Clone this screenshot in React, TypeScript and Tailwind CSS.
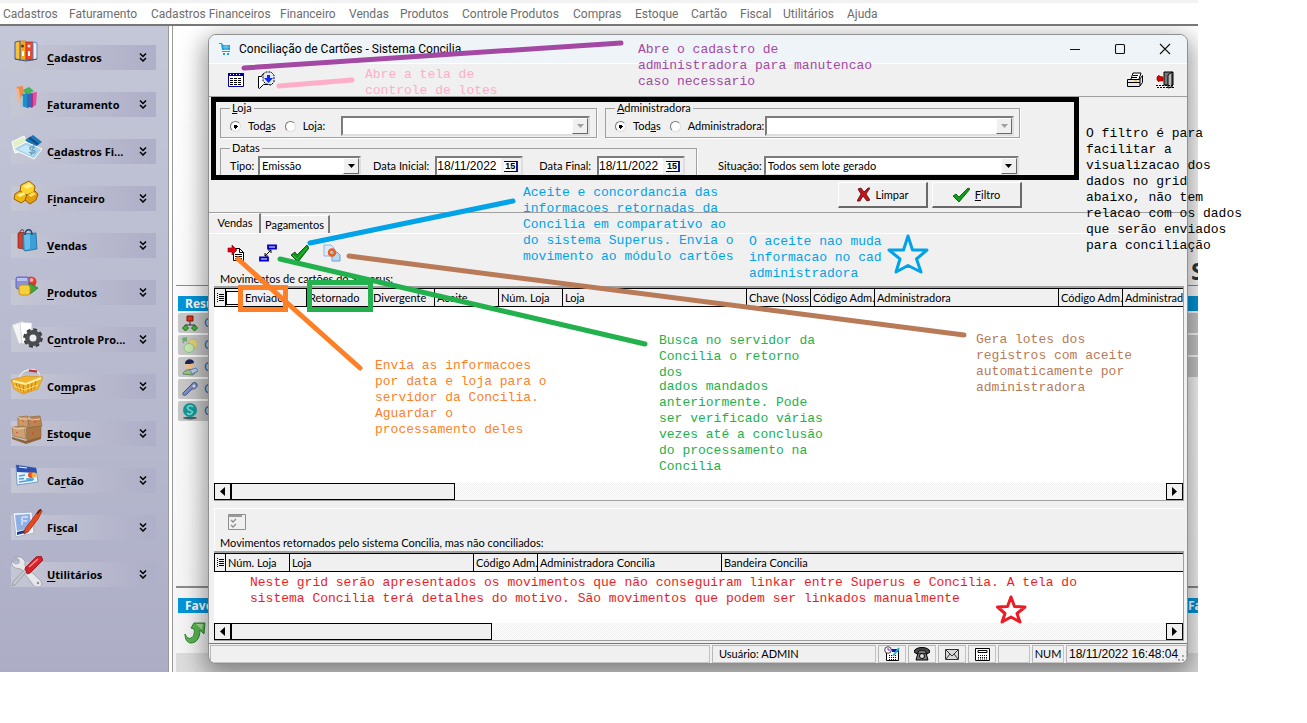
import type { ReactNode } from "react";

const MENU = [
  ["Cadastros", "w-[66px]"],
  ["Faturamento", "w-[82px]"],
  ["Cadastros Financeiros", "w-[129px]"],
  ["Financeiro", "w-[69px]"],
  ["Vendas", "w-[51px]"],
  ["Produtos", "w-[62px]"],
  ["Controle Produtos", "w-[111px]"],
  ["Compras", "w-[62px]"],
  ["Estoque", "w-[56px]"],
  ["Cartão", "w-[49px]"],
  ["Fiscal", "w-[43px]"],
  ["Utilitários", "w-[64px]"],
  ["Ajuda", "w-[40px]"],
];

/* ---------- sidebar icons, drawn on a 32 x 28 canvas ---------- */

const CadastrosIcon = (
  <>
    <path d="M9 2h6v19H9z" fill="#f6a91c" stroke="#c47a10" strokeWidth=".7" />
    <path d="M4 3l5-1v19l-5-1z" fill="#f3c23a" stroke="#3a5fa8" strokeWidth="1" />
    <path d="M15 3h7v18h-7z" fill="#e8492e" stroke="#a82a1a" strokeWidth=".7" />
    <path d="M22 3l4 1v16l-4 1z" fill="#e9edf6" stroke="#6a86bd" strokeWidth="1" />
    <circle cx="11.500" cy="7" r="1.500" fill="#7a2d10" />
    <circle cx="18" cy="7" r="1.500" fill="#ffe9e0" />
    <path d="M11 12h2v5h-2zM17 12h2v5h-2z" fill="#fff" />
    <path d="M4 20l11 2 11-2" stroke="#38588f" fill="none" />
  </>
);
const FaturamentoIcon = (
  <>
    <path d="M5 1l7-1 1 10-5 3z" fill="#ef8b4a" />
    <path d="M5 1l3 2 2 16-3-4z" fill="#f7b487" />
    <path d="M12 4l6-3 5 4-8 4z" fill="#45b35a" />
    <path d="M10 9l6-2v15l-5-2z" fill="#1e8ec4" />
    <path d="M10 9l2 1v11l-2-2z" fill="#7fd0ee" />
    <path d="M16 8l4-1v14l-4 1z" fill="#3c63b8" />
    <path d="M20 7l6-1-1 13-5 3z" fill="#e04fa0" />
    <path d="M20 7l2 1v13l-2 1z" fill="#b32d7c" />
  </>
);
const FinanceCardsIcon = (
  <>
    <path d="M1 9l12-6 5 13-14 4z" fill="#e3efc4" stroke="#fff" />
    <path d="M14 7l8-5 9 7-8 6z" fill="#1b76ba" />
    <path d="M17 5l2-1 9 7-2 1z" fill="#164a78" />
    <path d="M2 16l13-7 16 7-8 10z" fill="#a8d4ea" stroke="#fff" />
    <path d="M7 16l8-4 9 4-5 6z" fill="#c9e7f4" />
    <path d="M24 15c-2-2-6-1-5 1s6 1 5 3-5 1-6 0M23 12l-3 10" fill="none" stroke="#6c9fc0" strokeWidth="1.300" />
  </>
);
const GoldIcon = (
  <>
    <path d="M4 14l8-5 5 4-1 6-6 4-7-4z" fill="#f0b80e" stroke="#9b5f08" />
    <path d="M16 14l7-4 4 4-2 6-6 4-5-4z" fill="#e39e0b" stroke="#9b5f08" />
    <path d="M10 5l8-4 6 5-1 6-7 3-7-4z" fill="#ffd22c" stroke="#9b5f08" />
    <path d="M12 6l6-3 4 3-6 3z" fill="#fff08c" />
    <path d="M6 15l6-3 3 2-6 3z" fill="#fff08c" />
    <path d="M17 15l5-3 3 2-5 3z" fill="#ffdf5a" />
  </>
);
const BagsIcon = (
  <>
    <path d="M7 6l6-1v17l-6-1z" fill="#d0402b" stroke="#8f2415" strokeWidth=".7" />
    <path d="M12 7l13-1 1 16-12 2-2-2z" fill="#3b9fd8" stroke="#23689c" strokeWidth=".8" />
    <path d="M13 8l6-1v15l-5 1z" fill="#68bdea" />
    <path d="M14 8c0-6 7-8 7 0" fill="none" stroke="#1e4c72" strokeWidth="1.500" />
    <path d="M9 6c0-4 3-4 4-2" fill="none" stroke="#6a2418" />
  </>
);
const ShapesIcon = (
  <>
    <circle cx="20" cy="8" r="5.500" fill="#e23a2a" />
    <circle cx="20.500" cy="6" r="2" fill="#ffa79c" />
    <rect x="5" y="3" width="13" height="12" rx="2" fill="#8a90d6" stroke="#6065b2" />
    <path d="M6 4h10v3H6z" fill="#bcc0f0" />
    <path d="M18 9l9 5-8 6z" fill="#3fa63c" stroke="#257a25" strokeWidth=".8" />
    <rect x="8" y="11" width="11" height="10" rx="2.500" fill="#f7cf3a" stroke="#c6960e" />
  </>
);
const GearIcon = (
  <>
    <path d="M1 4l11-4 6 18-10 5z" fill="#f4f4f4" stroke="#c9c9cf" strokeWidth=".7" />
    <path d="M9 1l12 1-1 18-9 3z" fill="#fff" stroke="#c9c9cf" strokeWidth=".7" />
    <circle cx="22" cy="17" r="8" fill="none" stroke="#3c3e42" strokeWidth="3.500" strokeDasharray="3.600 2.680" />
    <circle cx="22" cy="17" r="5.500" fill="none" stroke="#4a4c50" strokeWidth="5" />
    <circle cx="22" cy="17" r="3.500" fill="#eceef2" />
  </>
);
const BasketIcon = (
  <>
    <path d="M8 10c3-9 16-12 21-3" fill="none" stroke="#e9e4e4" strokeWidth="1.500" />
    <path d="M18 2.500l8 1" stroke="#c02a2a" strokeWidth="2" />
    <path d="M0 12l15-4 17 1-5 12-15 5-9-5z" fill="#f2b32c" stroke="#d9951d" strokeWidth=".8" />
    <path d="M2 13l13 3 15-6" fill="none" stroke="#fff0a8" strokeWidth="2" />
    <path d="M5 15l2 6M8 16l2 7M12 17l1 8M17 16v8M21 15l-1 8M25 13l-2 8" stroke="#b9770d" strokeWidth=".9" fill="none" />
    <path d="M3 18l10 4 14-5" stroke="#ffe28a" strokeWidth=".9" fill="none" />
  </>
);
const BoxesIcon = (
  <>
    <path d="M1 22l14 4 15-5v3l-15 5-14-5z" fill="#8d6338" />
    <path d="M7 2l10-1v11H7z" fill="#c99b6b" stroke="#8e6238" strokeWidth=".6" />
    <path d="M17 2l12-1 2 10-13 2z" fill="#b98552" stroke="#8e6238" strokeWidth=".6" />
    <path d="M1 12l12-1 2 13-13-3z" fill="#cfa172" stroke="#8e6238" strokeWidth=".6" />
    <path d="M15 13l15-2v11l-14 4z" fill="#ab7746" stroke="#8e6238" strokeWidth=".6" />
    <path d="M7 2l3 2h9M17 2l4 3 8-1M1 12l5 2 8-1" stroke="#ead0b0" fill="none" />
    <path d="M11 5l2 2M24 5v3M5 17l2 1M22 17v3" stroke="#d2492f" />
  </>
);
const CardIcon = (
  <>
    <path d="M5 3l20 3 2 14-21 3z" fill="#eaf3fb" stroke="#7c9cc9" />
    <path d="M5 3l20 3 1 5-20-1z" fill="#2a4fb0" />
    <path d="M8 5l8 1" stroke="#fff" />
    <circle cx="20" cy="13" r="3" fill="#e5532c" />
    <circle cx="23" cy="13" r="2.500" fill="#f6b23c" />
    <path d="M8 14l6-1M8 17l5-.5M15 17h8M8 20l14-2" stroke="#4aa1d8" strokeWidth="1.500" />
  </>
);
const PenIcon = (
  <>
    <path d="M2 4l19-1 2 21-18 4z" fill="#f3f6fb" stroke="#a9b4cc" />
    <path d="M4 6l15-1 1 14-14 3z" fill="#8fb0e6" />
    <path d="M6 23l8-2v3l-8 2z" fill="#163f8f" />
    <path d="M11 8h6M11 12h5M11 8v8" stroke="#c5d8f6" strokeWidth="2" />
    <path d="M28 1l3 1-4 8-10 13-4 2 1-5z" fill="#e8481f" stroke="#9c2b0e" strokeWidth=".8" />
    <path d="M30 0l-4 5" stroke="#5c2413" strokeWidth="1.500" />
  </>
);
const ToolsIcon = (
  <>
    <path d="M4 1l6 0 4 4 0 5 16 15 1 4-3 2-5-1L10 13 4 12 1 9 0 5l5 3 3-1 0-3z" fill="#e6e7ea" stroke="#9b9ca4" strokeWidth=".8" />
    <path d="M16 15L4 29l-3 1 1-4 12-13z" fill="#c6c8ce" stroke="#8b8c94" strokeWidth=".7" />
    <path d="M14 12L25 1l5-1 2 4-13 13-3 1z" fill="#d6222c" stroke="#8f1018" strokeWidth=".8" />
    <path d="M18 11L27 3" stroke="#ff8d90" strokeWidth="1.500" />
    <circle cx="27" cy="27" r="1.200" fill="#8b8c94" />
  </>
);

const SIDE: [ReactNode, string, string, string][] = [
  [CadastrosIcon, "", "C", "adastros"],
  [FaturamentoIcon, "", "F", "aturamento"],
  [FinanceCardsIcon, "C", "a", "dastros Fi..."],
  [GoldIcon, "F", "i", "nanceiro"],
  [BagsIcon, "", "V", "endas"],
  [ShapesIcon, "", "P", "rodutos"],
  [GearIcon, "C", "o", "ntrole Pro..."],
  [BasketIcon, "Co", "m", "pras"],
  [BoxesIcon, "", "E", "stoque"],
  [CardIcon, "Ca", "r", "tão"],
  [PenIcon, "Fi", "s", "cal"],
  [ToolsIcon, "", "U", "tilitários"],
];

function Sidebar() {
  return (
    <nav className="w-[168px] shrink-0 bg-linear-to-b from-[#c4c7d7] via-[#b8bbd0] to-[#adaec6] pt-[19px] pr-3 pl-[11px]">
      {SIDE.map(([icon, a, u, b]) => (
        <button
          key={a + u + b}
          type="button"
          className="mb-[22px] flex h-[25px] w-full items-center bg-linear-to-r from-[#c5c7d5] to-[#aeafc8] text-left text-[11px] font-bold text-black"
        >
          <svg viewBox="0 0 32 30" className="-mt-2 h-[30px] w-8 shrink-0">{icon}</svg>
          <span className="ml-1 flex-1 pt-px whitespace-nowrap">
            {a}
            <u className="underline-offset-2">{u}</u>
            {b}
          </span>
          <svg viewBox="0 0 8 9" className="mr-[9px] h-[9px] w-2" fill="none" stroke="#000" strokeWidth="1.500">
            <path d="M1 .5l3 3 3-3M1 5l3 3 3-3" />
          </svg>
        </button>
      ))}
    </nav>
  );
}

/* ---------- dashboard behind the dialog ---------- */

const HierarchyIcon = (
  <>
    <path d="M8 6v4M3 12v-2h10v2" stroke="#333" fill="none" />
    <path d="M5 1h6v5H5z" fill="#e0341c" stroke="#7d1a0c" />
    <path d="M3.500 10l3 3-3 3-3-3zM12.500 10l3 3-3 3-3-3z" fill="#3fb53a" stroke="#1d6c1b" />
  </>
);
const MoneyIcon = (
  <>
    <ellipse cx="11" cy="7" rx="5" ry="5" fill="#e9d27a" stroke="#b3c08a" />
    <ellipse cx="7" cy="11" rx="5" ry="4.500" fill="#c9e8b4" stroke="#8cc58a" />
    <path d="M0 1l5-1v5L3 4l-2 3z" fill="#6fae77" />
  </>
);
const PersonIcon = (
  <>
    <path d="M1 15c0-5 12-6 14-3l-4 4z" fill="#9ac28c" stroke="#5f8a56" />
    <path d="M8 11l6-2 2 3-6 3z" fill="#bcd0ec" stroke="#6b86b5" />
    <circle cx="7" cy="6" r="4" fill="#f2c48e" />
    <path d="M3 5c0-6 9-6 9-1L8 5z" fill="#1d2658" />
  </>
);
const WrenchIcon = (
  <>
    <path d="M1 12l8-8c2-4 7-3 6 1-1 3-4 3-5 3l-6 6c-3 1-4-1-3-2z" fill="#7d8fc0" stroke="#45568c" />
    <circle cx="12" cy="5" r="1.500" fill="#dfe4f2" />
  </>
);
const GlobeIcon = (
  <>
    <ellipse cx="8" cy="15" rx="7" ry="1.500" fill="#496268" />
    <circle cx="8" cy="7" r="7" fill="#159a9a" />
    <path d="M11 4C8 1 4 4 6 6s6 2 4 4-4 1-5 0" stroke="#7fe0da" strokeWidth="1.500" fill="none" />
  </>
);
const QUICK = [HierarchyIcon, MoneyIcon, PersonIcon, WrenchIcon, GlobeIcon];

function Dashboard() {
  return (
    <div className="absolute inset-0 flex flex-col bg-linear-to-b from-white to-[#f4f4f4] pl-[3px]">
      <div className="flex h-[260px] items-end justify-end overflow-hidden border-b border-[#8c8c8c] pb-[2px]">
        <span className="w-[7px] overflow-hidden text-[24px] leading-6 font-bold text-[#333]">S</span>
      </div>
      <div className="flex h-[302px] justify-between border-b-2 border-[#8c8c8c] pt-[10px] pl-[2px]">
        <section className="w-1/2">
          <h2 className="h-[15px] bg-[#0095da] pl-[7px] text-[12px] leading-[15px] font-bold text-white">Resu</h2>
          <ul className="mt-[2px] flex flex-col gap-[2px]">
            {QUICK.map((icon, i) => (
              <li key={i} className="flex h-5 items-center rounded-l-xs bg-[#c8c8c8] pl-1">
                <svg viewBox="0 0 16 17" className="h-[17px] w-4">{icon}</svg>
                <span className="ml-[6px] text-[13px] text-[#2a5cc4]">C</span>
              </li>
            ))}
          </ul>
        </section>
        <section className="flex w-1/2 flex-col gap-[2px]">
          <div className="h-[15px] bg-[#0095da]" />
          <div className="h-5 bg-[#c8c8c8]" />
          <div className="h-5 bg-[#c8c8c8]" />
          <div className="h-5 bg-[#c8c8c8]" />
        </section>
      </div>
      <div className="mt-[10px] ml-[2px] flex h-[15px] items-center justify-between bg-[#0095da] pl-[7px] text-[12px] font-bold text-white">
        <h2>Favo</h2>
        <span className="w-[10px] overflow-hidden">Fa</span>
      </div>
      <svg viewBox="0 0 22 24" className="mt-2 ml-2 h-6 w-[22px]">
        <path d="M10 2l11 0-1 11-4-4c0 7-3 13-9 13-4 0-6-4-6-9 2 4 4 5 6 4 3-1 4-6 3-9L7 7z" fill="#5bb750" stroke="#2f8333" />
        <path d="M12 3h7l-1 6-2-2z" fill="#a3e092" />
      </svg>
      <div className="mt-2 flex-1 bg-[#dcdcdc]" />
    </div>
  );
}

/* ---------- classic controls ---------- */

const SUNKEN = "border-2 border-t-[#7b7b7b] border-l-[#7b7b7b] border-r-[#dedede] border-b-[#dedede] bg-white";
const RAISED = "border-t border-l border-t-white border-l-white border-r-[#696969] border-b-[#696969] bg-[#f0f0f0]";

function Combo({ id, value, width, disabled }: { id: string; value: string; width: string; disabled?: boolean }) {
  return (
    <span className={`relative inline-flex h-5 ${width} ${SUNKEN}`}>
      <select id={id} aria-label={id} disabled={disabled} defaultValue={value} className="w-full appearance-none bg-white pl-[2px] text-[11px] leading-4 text-black opacity-100 outline-none">
        <option>{value}</option>
      </select>
      <span className={`pointer-events-none absolute inset-y-0 right-0 flex w-4 items-center justify-center border-r border-b ${RAISED}`}>
        <svg viewBox="0 0 7 4" className="h-1 w-[7px]">
          <path d="M0 0h7L3.500 4z" fill={disabled ? "#a0a0a0" : "#000"} />
        </svg>
      </span>
    </span>
  );
}

function DateBox({ id }: { id: string }) {
  return (
    <span className={`flex h-5 w-[88px] font-['Liberation_Sans',Arial,sans-serif] ${SUNKEN}`}>
      <input id={id} defaultValue="18/11/2022" className="w-full min-w-0 bg-white text-[12px] leading-4 text-black outline-none" />
      <button type="button" aria-label="Calendário" className="flex w-5 shrink-0 items-center justify-center bg-[#f0f0f0]">
        <span className="border-t border-r-2 border-b border-black border-r-[#1c1c8a] bg-white px-px text-[9px] leading-[9px] font-bold">15</span>
      </button>
    </span>
  );
}

function Radio({ name, id, checked, children }: { name: string; id: string; checked?: boolean; children: ReactNode }) {
  return (
    <>
      <input
        id={id}
        type="radio"
        name={name}
        defaultChecked={checked}
        className="size-[11px] appearance-none rounded-full border border-t-[#777] border-r-[#ddd] border-b-[#ddd] border-l-[#777] bg-white checked:bg-[radial-gradient(circle,#000_0_2px,#fff_2px)]"
      />
      <label htmlFor={id} className="mr-[9px] ml-[7px] whitespace-nowrap">{children}</label>
    </>
  );
}

const GROUP = "min-w-0 shrink-0 border border-[#a0a0a0] pr-[6px] pl-[9px] shadow-[1px_1px_0_#fff]";
const LEGEND = "px-[2px] leading-[14px]";

function Filters() {
  return (
    <form className="border-b border-[#a0a0a0] pt-1 pb-1 pl-[11px]" onSubmit={(e) => e.preventDefault()}>
      <div className="flex gap-2">
        <fieldset className={`w-[377px] ${GROUP}`}>
          <legend className={LEGEND}><u>L</u>oja</legend>
          <div className="flex h-[22px] items-center">
            <Radio name="loja" id="loja-todas" checked>Tod<u>a</u>s</Radio>
            <Radio name="loja" id="loja-uma">Loja:</Radio>
            <span className="ml-auto flex"><Combo id="Loja" value="" width="w-[249px]" disabled /></span>
          </div>
        </fieldset>
        <fieldset className={`w-[415px] ${GROUP}`}>
          <legend className={LEGEND}><u>A</u>dministradora</legend>
          <div className="flex h-[22px] items-center justify-between">
            <span className="flex items-center">
              <Radio name="adm" id="adm-todas" checked>Tod<u>a</u>s</Radio>
              <Radio name="adm" id="adm-uma">Administradora:</Radio>
            </span>
            <span className="-ml-2 flex"><Combo id="Administradora" value="" width="w-[249px]" disabled /></span>
          </div>
        </fieldset>
      </div>
      <div className="mt-[3px] flex">
        <fieldset className={`w-[477px] ${GROUP}`}>
          <legend className={LEGEND}>Datas</legend>
          <div className="flex h-[22px] items-center">
            <label htmlFor="Tipo" className="w-7">Tipo:</label>
            <Combo id="Tipo" value="Emissão" width="w-[103px]" />
            <label htmlFor="ini" className="mr-[6px] ml-auto">Data Inicial:</label>
            <DateBox id="ini" />
            <label htmlFor="fim" className="mr-[6px] ml-4">Data Final:</label>
            <DateBox id="fim" />
            <span className="w-[5px]" />
          </div>
        </fieldset>
        <div className="flex items-center gap-[2px] pt-3 pl-[21px]">
          <label htmlFor="Situacao">Situação:</label>
          <Combo id="Situacao" value="Todos sem lote gerado" width="w-[255px]" />
        </div>
      </div>
      <div className="mt-1 flex w-[802px] justify-end gap-1">
        <button type="button" className={`flex h-[26px] w-[90px] items-center justify-center gap-[6px] border-r-2 border-b-2 ${RAISED}`}>
          <svg viewBox="0 0 13 15" className="h-[15px] w-[13px]">
            <path d="M1 2l3-1 3 4 4-4h2L9 7l4 6-3 1-4-5-3 5H0l4-7z" fill="#c4151b" stroke="#5c0608" strokeWidth=".8" />
          </svg>
          Limpar
        </button>
        <button type="submit" className={`flex h-[26px] w-[90px] items-center justify-center gap-[5px] border-r-2 border-b-2 ${RAISED}`}>
          <svg viewBox="0 0 17 15" className="h-[15px] w-[17px]">
            <path d="M0 9l3-2 3 3 9-9 2 1-11 13z" fill="#0aa014" stroke="#06430a" strokeWidth=".8" />
          </svg>
          <span><u>F</u>iltro</span>
        </button>
      </div>
    </form>
  );
}

function Scrollbar({ thumb }: { thumb: string }) {
  return (
    <div className="flex h-[17px] bg-[repeating-conic-gradient(#f0f0f0_0_25%,#fff_0_50%)] bg-[length:2px_2px]">
      <button type="button" aria-label="Rolar para a esquerda" className="flex w-[17px] items-center justify-center border border-black bg-[#f0f0f0]">
        <svg viewBox="0 0 5 9" className="h-[9px] w-[5px]"><path d="M5 0v9L0 4.500z" /></svg>
      </button>
      <div className={`border border-black bg-[#f0f0f0] ${thumb}`} />
      <button type="button" aria-label="Rolar para a direita" className="ml-auto flex w-[17px] items-center justify-center border border-black bg-[#f0f0f0]">
        <svg viewBox="0 0 5 9" className="h-[9px] w-[5px]"><path d="M0 0v9l5-4.500z" /></svg>
      </button>
    </div>
  );
}

function Grid({ cols, check, body, thumb }: { cols: [string, string][]; check?: boolean; body: string; thumb: string }) {
  return (
    <div className="border-t-2 border-r border-b border-[#a0a0a0] bg-white">
      <div className={body}>
        <table className="w-full table-fixed border-collapse bg-[#f0f0f0]">
          <thead>
            <tr className="h-[18px] border-y border-black">
              <th className="w-[11px] border-l border-black p-0">
                <svg viewBox="0 0 7 9" className="mx-auto h-[9px] w-[7px]" stroke="#000" shapeRendering="crispEdges">
                  <path d="M0 .5h1M0 2.500h1M0 4.500h1M0 6.500h1M0 8.500h1M2 1.500h5M2 3.500h5M2 5.500h5M2 7.500h5" />
                </svg>
              </th>
              {cols.map(([label, width], i) => (
                <th key={i} className={`overflow-hidden border-l border-black p-0 pl-[2px] text-left font-normal whitespace-nowrap ${width}`}>
                  {check && i === 0 ? (
                    <span className="flex items-center gap-[5px]">
                      <input type="checkbox" aria-label="Selecionar todos" className="-ml-[2px] size-[14px] appearance-none border border-black bg-white" />
                      {label}
                    </span>
                  ) : (
                    label
                  )}
                </th>
              ))}
            </tr>
          </thead>
        </table>
      </div>
      <Scrollbar thumb={thumb} />
    </div>
  );
}

const SALES: [string, string][] = [
  ["Enviado", "w-[81px]"],
  ["Retornado", "w-16"],
  ["Divergente", "w-16"],
  ["Aceite", "w-16"],
  ["Núm. Loja", "w-16"],
  ["Loja", "w-[184px]"],
  ["Chave (Noss", "w-16"],
  ["Código Adm.", "w-16"],
  ["Administradora", "w-[184px]"],
  ["Código Adm.", "w-16"],
  ["Administrado", "w-auto"],
];
const RETURNED: [string, string][] = [
  ["Núm. Loja", "w-16"],
  ["Loja", "w-[184px]"],
  ["Código Adm.", "w-16"],
  ["Administradora Concilia", "w-[184px]"],
  ["Bandeira Concilia", "w-auto"],
];

function IconButton({ label, children }: { label: string; children: ReactNode }) {
  return (
    <button type="button" aria-label={label} className="flex size-5 items-center justify-center">
      <svg viewBox="0 0 18 18" className="size-[18px]">{children}</svg>
    </button>
  );
}

const STATUS = "flex items-center justify-center border border-t-[#b8b8b8] border-l-[#b8b8b8] border-r-[#c4c4c4] border-b-[#c4c4c4]";

function Dialog() {
  return (
    <main className="relative mt-2 mr-[10px] mb-2 ml-[35px] overflow-hidden rounded-lg border border-[#8f8f8f] bg-[#f0f0f0] text-[11px] leading-[14px] text-black">
      <header className="flex h-[29px] items-center border-b border-white bg-[#eff4f8] pl-[10px]">
        <svg viewBox="0 0 12 13" className="h-[13px] w-3" fill="#1aa3e0">
          <path d="M0 0h3l1 2h7v5H3L2 1H0zM3 8h8v1H3zM4 10h2v2H4zM8 10h2v2H8z" />
          <path d="M4 4h6M6 2v5M8 2v5" stroke="#bfe6f7" strokeWidth=".5" />
        </svg>
        <h1 className="ml-2 font-[Roboto,sans-serif] text-[12px]">Conciliação de Cartões - Sistema Concilia</h1>
        <div className="ml-auto flex">
          {["M1 6.500h10", "M1.500 2.500q0-1 1-1h7q1 0 1 1v7q0 1-1 1h-7q-1 0-1-1z", "M1 1l10 10M11 1L1 11"].map((d, i) => (
            <button key={i} type="button" aria-label={["Minimizar", "Maximizar", "Fechar"][i]} className="flex w-[45px] justify-center">
              <svg viewBox="0 0 12 12" className="size-3" fill="none" stroke="#111" strokeWidth="1.100"><path d={d} /></svg>
            </button>
          ))}
        </div>
      </header>

      <div className="flex h-[33px] items-center border-b border-[#a0a0a0] pr-3 pl-[17px]">
        <IconButton label="Administradoras">
          <path d="M1.500 2.500h15v13h-15z" fill="#fff" stroke="#0000a8" />
          <path d="M1 2h16v3H1z" fill="#0000a8" />
          <path d="M3 7.500h12M3 9.500h12M3 11.500h12M3 13.500h12" stroke="#000" strokeDasharray="3 1" shapeRendering="crispEdges" />
          <path d="M3 3.500h12" stroke="#fff" strokeDasharray="1 2" />
        </IconButton>
        <span className="w-[10px]" />
        <IconButton label="Lotes">
          <path d="M1.500 17V5.500h3l1-2h5l1 2h3v8h-8l-4 4z" fill="#fff" stroke="#000" />
          <path d="M6 3l3-2h5l3 3v7l-3 3-5-1-3-3z" fill="#e4e8f0" stroke="#000" strokeDasharray="2 1" />
          <path d="M10 4h3v3h3l-4.500 5L7 7h3z" fill="#0d2be8" />
        </IconButton>
        <span className="ml-auto" />
        <IconButton label="Imprimir">
          <path d="M5 8l2-6h8l-2 6" fill="#fff" stroke="#000" />
          <path d="M1.500 8.500h12l3-4v7l-3 4h-12z" fill="#e8e8e8" stroke="#000" />
          <path d="M1 11.500h13M14 8v7M7 4.500h5M6 6.500h5" stroke="#000" />
          <path d="M8 10h3" stroke="#d8c400" />
        </IconButton>
        <span className="w-[10px]" />
        <IconButton label="Sair">
          <path d="M8 1h9v13H8z" fill="#777" stroke="#000" />
          <path d="M12 4l4-3v15l-4 1z" fill="#bbb" stroke="#000" />
          <path d="M1 6l2-2v1l4 1v4H3v1L1 9z" fill="#e00000" stroke="#600" strokeWidth=".6" />
          <path d="M0 14.500h18M1 16.500h17" stroke="#000" strokeDasharray="2 1" />
        </IconButton>
      </div>

      <Filters />

      <div role="tablist" className="flex h-[21px] items-end border-b border-white pl-[2px]">
        <button role="tab" type="button" aria-selected="true" className="h-5 w-[50px] border-t border-r-2 border-t-white border-r-[#7b7b7b] pb-[2px]">Vendas</button>
        <button role="tab" type="button" aria-selected="false" className="h-[18px] w-[69px] border-t border-r-2 border-t-white border-r-[#7b7b7b]">Pagamentos</button>
      </div>

      <div className="pr-[3px] pl-[5px]">
        <div className="flex h-[37px] items-center gap-3 pl-3">
          <IconButton label="Enviar">
            <path d="M6.500 4.500h6l4 4v8h-10z" fill="#fff" stroke="#000" />
            <path d="M12.500 4.500v4h4M8 10.500h7M8 12.500h7M8 14.500h7" fill="none" stroke="#000" />
            <path d="M1 4h4V1l5 5-5 5V8H1z" fill="#e8000c" stroke="#700" strokeWidth=".6" />
          </IconButton>
          <IconButton label="Buscar retorno">
            <path d="M9 1.500h8v3H9zM1 13.500h8v3H1z" fill="#fff" stroke="#0000c8" strokeWidth="1.800" />
            <path d="M6 12l6-6M6 9v3h3M9 6h3v3" stroke="#000" fill="none" />
          </IconButton>
          <IconButton label="Aceitar">
            <path d="M0 11l4-3 2 3L16 1l2 3L7 18z" fill="#0c9a18" stroke="#053d08" strokeWidth=".8" />
            <path d="M2 11l4 4L16 4" stroke="#2fc43a" fill="none" />
          </IconButton>
          <IconButton label="Gerar lotes">
            <path d="M1 1h7l3 3v8H1z" fill="#dcecfa" stroke="#8fb6dc" />
            <path d="M9 8h5l3 3v6H9z" fill="#b9d8f4" stroke="#6e9fd0" />
            <circle cx="9" cy="8.500" r="3" fill="none" stroke="#e8601c" strokeWidth="2.500" />
          </IconButton>
        </div>
        <p className="pl-[6px] leading-[15px]">Movimentos de cartões do Superus:</p>
        <Grid cols={SALES} check body="h-[195px]" thumb="w-[224px]" />

        <div className="mt-[7px] border-t border-l border-white">
          <div className="flex h-[26px] items-center pl-3">
            <IconButton label="Vincular">
              <path d="M.500 1.500h17v15H.500z" fill="#f0f0f0" stroke="#8f8f8f" />
              <path d="M1 3h13" stroke="#9a9a9a" strokeWidth="2" />
              <path d="M3 7l2 2 3-3M3 12l2 2 3-3" stroke="#8f8f8f" fill="none" strokeWidth="1.300" />
            </IconButton>
          </div>
          <p className="pl-[5px] leading-4">Movimentos retornados pelo sistema Concilia, mas não conciliados:</p>
        </div>
        <Grid cols={RETURNED} body="h-[70px]" thumb="w-[261px]" />
      </div>

      <footer className="mt-[2px] flex h-5 gap-[2px] border-t border-[#777] pt-px pl-px">
        <div className={`flex-1 ${STATUS}`} />
        <div className={`w-[164px] ${STATUS} !justify-start pl-[6px]`}>Usuário: ADMIN</div>
        <div className={`w-7 ${STATUS}`}>
          <svg viewBox="0 0 16 16" className="size-4">
            <path d="M4.500 3.500h10v11h-12v-8" fill="#fff" stroke="#000" />
            <path d="M8 3h7v3H8z" fill="#1414b8" />
            <path d="M5 9.500h7M5 11.500h7M5 13.500h7" stroke="#000" strokeDasharray="1 1" />
            <circle cx="4" cy="4" r="3.300" fill="#fff" stroke="#444" />
            <path d="M4 2v2h2" stroke="#c000c0" fill="none" />
            <path d="M15 2l-6 8" stroke="#18b8c8" strokeWidth="2" />
          </svg>
        </div>
        <div className={`w-7 ${STATUS}`}>
          <svg viewBox="0 0 16 14" className="h-[14px] w-4">
            <path d="M0 5c0-6 16-6 16 0l-3 2-2-3H5L3 7z" fill="#444" stroke="#000" />
            <path d="M4 6h8l2 7H2z" fill="#777" stroke="#000" />
            <circle cx="8" cy="9" r="2.500" fill="#ddd" stroke="#000" />
          </svg>
        </div>
        <div className={`w-7 ${STATUS}`}>
          <svg viewBox="0 0 14 11" className="h-[11px] w-[14px]">
            <path d="M.500.500h13v10H.500z" fill="#d8d8d8" stroke="#333" />
            <path d="M1 1l6 6 6-6M1 10l4-5M13 10L9 5" stroke="#333" fill="none" />
          </svg>
        </div>
        <div className={`w-7 ${STATUS}`}>
          <svg viewBox="0 0 15 13" className="h-[13px] w-[15px]">
            <path d="M.500.500h14v12H.500z" fill="#fff" stroke="#000" />
            <path d="M3 2.500h9v2H3z" fill="#fff" stroke="#000" />
            <path d="M3 7.500h10M3 9.500h10M3 11h10" stroke="#000" strokeDasharray="1 1" />
          </svg>
        </div>
        <div className={`w-8 ${STATUS}`} />
        <div className={`w-8 ${STATUS}`}>NUM</div>
        <div className={`w-[121px] ${STATUS} !justify-between pl-[2px] font-['Liberation_Sans',Arial,sans-serif] text-[12px] whitespace-nowrap`}>
          18/11/2022 16:48:04
          <svg viewBox="0 0 10 11" className="mt-1 h-[11px] w-[10px] shrink-0" fill="#a8a8a8">
            <path d="M8 0h2v2H8zM4 4h2v2H4zM8 4h2v2H8zM0 8h2v2H0zM4 8h2v2H4zM8 8h2v2H8z" />
          </svg>
        </div>
      </footer>
    </main>
  );
}

/* ---------- hand-made notes over the screen ---------- */

const NOTES: [string, string][] = [
  ["left-[638px] top-[42px] text-[#a349a4]", "Abre o cadastro de\nadministradora para manutencao\ncaso necessario"],
  ["left-[365px] top-[67px] text-[#ffaec9]", "Abre a tela de\ncontrole de lotes"],
  ["left-[1086px] top-[126px] text-black", "O filtro é para\nfacilitar a\nvisualizacao dos\ndados no grid\nabaixo, não tem\nrelacao com os dados\nque serão enviados\npara conciliação"],
  ["left-[523px] top-[185px] text-[#00a2e8]", "Aceite e concordancia das\ninformacoes retornadas da\nConcilia em comparativo ao\ndo sistema Superus. Envia o\nmovimento ao módulo cartões"],
  ["left-[749px] top-[234px] text-[#00a2e8]", "O aceite nao muda\ninformacao no cad\nadministradora"],
  ["left-[375px] top-[358px] text-[#ff7f27]", "Envia as informacoes\npor data e loja para o\nservidor da Concilia.\nAguardar o\nprocessamento deles"],
  ["left-[659px] top-[333px] text-[#22b14c]", "Busca no servidor da\nConcilia o retorno\ndos"],
  ["left-[659px] top-[379px] text-[#22b14c]", "dados mandados\nanteriormente. Pode\nser verificado várias\nvezes até a conclusão\ndo processamento na\nConcilia"],
  ["left-[976px] top-[332px] text-[#b97a57]", "Gera lotes dos\nregistros com aceite\nautomaticamente por\nadministradora"],
  ["left-[250px] top-[575px] text-[#ed1c24]", "Neste grid serão apresentados os movimentos que não conseguiram linkar entre Superus e Concilia. A tela do\nsistema Concilia terá detalhes do motivo. São movimentos que podem ser linkados manualmente"],
];

function Notes() {
  return (
    <div className="pointer-events-none absolute inset-0 font-['Liberation_Mono',monospace] text-[13px] leading-4">
      <svg className="absolute top-0 left-0 h-full w-full" fill="none" strokeWidth="5" strokeLinecap="round">
        <rect x="213.500" y="99.500" width="863" height="78" stroke="#000" />
        <path d="M244 68L621 43" stroke="#a349a4" />
        <path d="M279 86L352 80" stroke="#ffaec9" />
        <path d="M310 243L513 201" stroke="#00a2e8" />
        <path d="M349 256L964 335" stroke="#b97a57" />
        <rect x="309.500" y="282.500" width="61" height="27" stroke="#22b14c" />
        <path d="M280 259L645 344" stroke="#22b14c" />
        <rect x="240.500" y="287.500" width="45" height="22" stroke="#ff7f27" />
        <path d="M238 259L360 368" stroke="#ff7f27" />
        <path d="M908 236L912.500 250H927L916.500 259 921 272 908 265.500 896 272 900 259 889 250H903.500Z" stroke="#00a2e8" strokeWidth="3" strokeLinejoin="round" />
        <path d="M1011 597L1014.500 606.500 1025 607 1017 613.500 1020 622 1011 617 1002 622 1005 613.500 997.500 607 1007.500 606.500Z" stroke="#ed1c24" strokeWidth="3" strokeLinejoin="round" />
      </svg>
      {NOTES.map(([cls, text]) => (
        <p key={text} className={`absolute whitespace-pre ${cls}`}>{text}</p>
      ))}
    </div>
  );
}

export default function App() {
  return (
    <div className="relative min-h-screen overflow-hidden bg-white font-[Roboto,sans-serif]">
      <div className="mr-[109px] overflow-hidden">
        <nav className="flex h-[26px] items-center border-t-[3px] border-b-2 border-t-[#f2f2f2] border-b-[#777] bg-white pl-[3px] text-[12px] whitespace-nowrap text-[#6d6d6d]">
          {MENU.map(([label, width]) => (
            <a key={label} href="#" className={`shrink-0 ${width}`}>{label}</a>
          ))}
        </nav>
        <div className="flex font-['Open_Sans',sans-serif]">
          <Sidebar />
          <div className="w-[5px] shrink-0 border-x border-[#999] bg-white" />
          <div className="relative min-w-0 flex-1 overflow-hidden">
            <Dashboard />
            <div className="relative font-[Lato,sans-serif] [&>main]:shadow-[0_8px_24px_4px_rgba(0,0,0,0.4)]">
              <Dialog />
            </div>
          </div>
        </div>
      </div>
      <Notes />
    </div>
  );
}
